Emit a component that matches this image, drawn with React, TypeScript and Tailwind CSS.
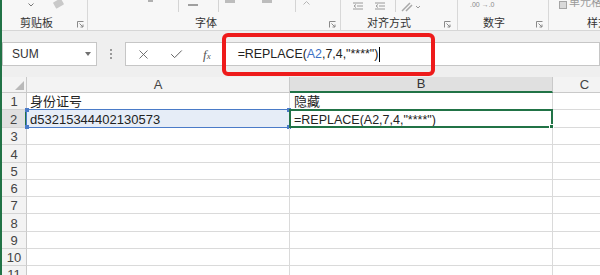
import { Check, X } from 'lucide-react'

const ROWS = [
  { n: 1, h: 'h-[17px]' },
  { n: 2, h: 'h-[18px]' },
  { n: 3, h: 'h-[17px]' },
  { n: 4, h: 'h-[18px]' },
  { n: 5, h: 'h-[17px]' },
  { n: 6, h: 'h-[17px]' },
  { n: 7, h: 'h-[17px]' },
  { n: 8, h: 'h-[18px]' },
  { n: 9, h: 'h-[17px]' },
  { n: 10, h: 'h-[17px]' },
  { n: 11, h: 'h-[17px]' },
]

const font = "font-['Liberation_Sans','Noto_Sans_CJK_SC',sans-serif]"

function Launcher() {
  return (
    <svg width="7" height="7" viewBox="0 0 7 7" className="shrink-0">
      <path d="M0.5 6.5V0.5H6.5" fill="none" stroke="#8a8a8a" strokeWidth="1" />
      <path d="M2.5 2.5L6 6M6 3.5V6H3.5" fill="none" stroke="#8a8a8a" strokeWidth="1" />
    </svg>
  )
}

function Sep() {
  return <div className="h-[12px] w-px bg-[#d4d4d4]" />
}

function IndentIcon() {
  return (
    <svg width="10" height="8" viewBox="0 0 10 8">
      <path d="M0 1H10M4 4H10M0 7H10" stroke="#9a9a9a" strokeWidth="1" />
      <path d="M3 2.5L1 4L3 5.5" fill="none" stroke="#9a9a9a" strokeWidth="1" />
    </svg>
  )
}

export default function App() {
  return (
    <div className={`relative h-[275px] w-[600px] overflow-hidden border-l-2 border-[#217346] bg-white ${font}`}>
      {/* ribbon */}
      <div className="flex h-[31px] bg-[#f7f7f7] border-b border-[#d6d6d6] text-[#333]">
        <div className="flex w-[86px] shrink-0 flex-col border-r border-[#d8d8d8]">
          <div className="flex h-[14px] items-start">
            <svg width="6" height="4" viewBox="0 0 6 4" className="ml-[26px] mt-[3px]">
              <path d="M0.5 0.5L3 3L5.5 0.5" fill="none" stroke="#777" strokeWidth="1" />
            </svg>
            <div className="ml-[20px] h-[7px] w-[9px] rotate-[-30deg] rounded-[1px] bg-[#c9c9c9]" />
          </div>
          <div className="flex h-[16px] items-center">
            <span className="ml-[18px] mt-[2px] text-[11px] leading-none">剪贴板</span>
            <div className="ml-auto mr-[3px] mt-[4px]"><Launcher /></div>
          </div>
        </div>

        <div className="flex w-[253px] shrink-0 flex-col border-r border-[#d8d8d8]">
          <div className="flex h-[14px] items-start">
            <div className="ml-[60px] h-[2px] w-[5px] bg-[#b0b0b0]" />
            <div className="ml-[25px]"><Sep /></div>
            <div className="ml-[9px] mt-[4px] h-[2px] w-[10px] bg-[#a0a0a0]" />
            <div className="ml-[20px]"><Sep /></div>
            <div className="ml-[6px] h-[3px] w-[10px] bg-[#bdbdbd]" />
            <div className="ml-[27px] h-[3px] w-[10px] bg-[#bdbdbd]" />
            <div className="ml-[23px]"><Sep /></div>
            <svg width="7" height="4" viewBox="0 0 7 4" className="ml-[7px] mt-[1px]">
              <path d="M0.5 3.5L3.5 0.5L6.5 3.5" fill="none" stroke="#b5b5b5" strokeWidth="1" />
            </svg>
          </div>
          <div className="flex h-[16px] items-center">
            <span className="ml-[107px] mt-[2px] text-[11px] leading-none">字体</span>
            <div className="ml-auto mr-[4px] mt-[4px]"><Launcher /></div>
          </div>
        </div>

        <div className="flex w-[117px] shrink-0 flex-col border-r border-[#d8d8d8]">
          <div className="flex h-[14px] items-start pt-[2px]">
            <div className="ml-[12px]"><IndentIcon /></div>
            <div className="ml-[12px]"><IndentIcon /></div>
            <div className="-mt-[2px] ml-[10px]"><Sep /></div>
            <svg width="24" height="10" viewBox="0 0 24 10" className="ml-[4px]">
              <path d="M2 9L10 1M6 9L12 3" stroke="#a8a8a8" strokeWidth="1.5" />
              <path d="M16 4L18 6L20 4" fill="none" stroke="#9a9a9a" strokeWidth="1" />
            </svg>
          </div>
          <div className="flex h-[16px] items-center">
            <span className="ml-[26px] mt-[2px] text-[11px] leading-none">对齐方式</span>
            <div className="ml-auto mr-[6px] mt-[4px]"><Launcher /></div>
          </div>
        </div>

        <div className="flex w-[91px] shrink-0 flex-col border-r border-[#d8d8d8]">
          <div className="flex h-[14px] items-start">
            <span className="ml-[12px] text-[7px] leading-[9px] text-[#8a8a8a]">.00 →.0</span>
          </div>
          <div className="flex h-[16px] items-center">
            <span className="ml-[25px] mt-[2px] text-[11px] leading-none">数字</span>
            <div className="ml-auto mr-[5px] mt-[4px]"><Launcher /></div>
          </div>
        </div>

        <div className="flex flex-1 flex-col overflow-hidden">
          <div className="flex h-[14px] items-start overflow-hidden">
            <div className="ml-[10px] mt-[1px] h-[8px] w-[8px] shrink-0 border border-[#a5a5a5] bg-[#d9d9d9]" />
            <span className="-mt-[3px] ml-[2px] whitespace-nowrap text-[11px] leading-none text-[#9a9a9a]">单元格</span>
          </div>
          <div className="flex h-[16px] items-center">
            <span className="ml-[38px] mt-[2px] whitespace-nowrap text-[11px] leading-none">样式</span>
          </div>
        </div>
      </div>

      {/* formula bar */}
      <div className="flex h-[46px] items-start bg-[#efefef] pt-[11px]">
        <div className="flex h-[24px] w-[95px] shrink-0 items-center border border-[#c6c6c6] bg-white">
          <span className="ml-[9px] text-[12px] text-[#333]">SUM</span>
          <svg width="6" height="4" viewBox="0 0 6 4" className="ml-auto mr-[5px]">
            <path d="M0 0H6L3 4Z" fill="#707070" />
          </svg>
        </div>
        <div className="flex h-[24px] w-[28px] shrink-0 flex-col items-center justify-center gap-[2px]">
          <div className="h-[2px] w-[2px] bg-[#9a9a9a]" />
          <div className="h-[2px] w-[2px] bg-[#9a9a9a]" />
          <div className="h-[2px] w-[2px] bg-[#9a9a9a]" />
        </div>
        <div className="flex h-[24px] flex-1 items-center border border-[#c6c6c6] bg-white">
          <X size={15} strokeWidth={1.4} className="ml-[10px] shrink-0 text-[#606060]" />
          <Check size={15} strokeWidth={1.6} className="ml-[18px] shrink-0 text-[#606060]" />
          <span className="ml-[19px] font-['Liberation_Serif',serif] text-[13px] italic leading-none text-[#555]">
            f<span className="text-[9px]">x</span>
          </span>
          <span className="ml-[27px] whitespace-nowrap text-[12.4px] text-[#222]">
            =REPLACE(<span className="text-[#3b6fc4]">A2</span>,7,4,"****")
          </span>
          <div className="ml-[1px] h-[15px] w-px bg-black" />
        </div>
      </div>

      {/* column headers */}
      <div className="flex h-[16px] text-[13px] leading-none text-[#444]">
        <div className="flex w-[25px] shrink-0 items-end justify-end border-r border-b border-[#c9c9c9] bg-[#f3f3f3] pb-[2px] pr-[2px]">
          <svg width="9" height="9" viewBox="0 0 9 9">
            <path d="M9 0V9H0Z" fill="#b9b9b9" />
          </svg>
        </div>
        <div className="flex w-[263px] shrink-0 items-end justify-center border-r border-b border-[#c9c9c9] bg-[#f3f3f3] pb-[1px]">A</div>
        <div className="flex w-[263px] shrink-0 items-end justify-center border-r border-[#c9c9c9] border-b-2 border-b-[#217346] bg-[#e0e0e0] pb-[1px] text-[#333]">B</div>
        <div className="flex w-[64px] shrink-0 items-end justify-center border-r border-b border-[#c9c9c9] bg-[#f3f3f3] pb-[1px]">C</div>
      </div>

      {/* rows */}
      {ROWS.map((row) => {
        const active = row.n === 2
        return (
          <div key={row.n} className={`flex ${row.h} text-[13px] leading-none`}>
            <div
              className={`flex w-[25px] shrink-0 items-end justify-center border-b border-[#d4d4d4] pb-[1px] text-[#444] ${
                active ? 'border-r-2 border-r-[#217346] bg-[#e0e0e0]' : 'border-r border-r-[#c9c9c9] bg-[#f3f3f3]'
              }`}
            >
              {row.n}
            </div>
            <div
              className={`relative flex w-[263px] shrink-0 items-end border-r border-b border-[#dadada] pb-[1px] pl-[3px] text-[#222] ${
                active ? 'bg-[#e6edf7]' : ''
              }`}
            >
              {row.n === 1 ? '身份证号' : null}
              {active ? (
                <>
                  <span>d53215344402130573</span>
                  <div className="absolute -left-px -top-px h-[19px] w-[264px] border border-[#4a7bc8]">
                    <div className="absolute -left-[2px] -top-[2px] h-[4px] w-[4px] bg-[#4a7bc8]" />
                    <div className="absolute -right-[2px] -top-[2px] h-[4px] w-[4px] bg-[#4a7bc8]" />
                    <div className="absolute -bottom-[2px] -left-[2px] h-[4px] w-[4px] bg-[#4a7bc8]" />
                    <div className="absolute -bottom-[2px] -right-[2px] h-[4px] w-[4px] bg-[#4a7bc8]" />
                  </div>
                </>
              ) : null}
            </div>
            <div className="relative flex w-[263px] shrink-0 items-end border-r border-b border-[#dadada] pb-[1px] pl-[4px] text-[#222]">
              {row.n === 1 ? '隐藏' : null}
              {active ? (
                <>
                  <span className="whitespace-nowrap text-[12.5px]">=REPLACE(A2,7,4,"****")</span>
                  <div className="absolute -left-px -top-px h-[19px] w-[264px] border-2 border-[#217346]">
                    <div className="absolute -bottom-[3px] -right-[3px] h-[5px] w-[5px] border border-white bg-[#217346]" />
                  </div>
                </>
              ) : null}
            </div>
            <div className="w-[64px] shrink-0 border-r border-b border-[#dadada]" />
          </div>
        )
      })}

      {/* annotation */}
      <div className="absolute left-[220px] top-[33px] h-[43px] w-[213px] rounded-[6px] border-[4px] border-[#ee1b1b]" />
    </div>
  )
}
